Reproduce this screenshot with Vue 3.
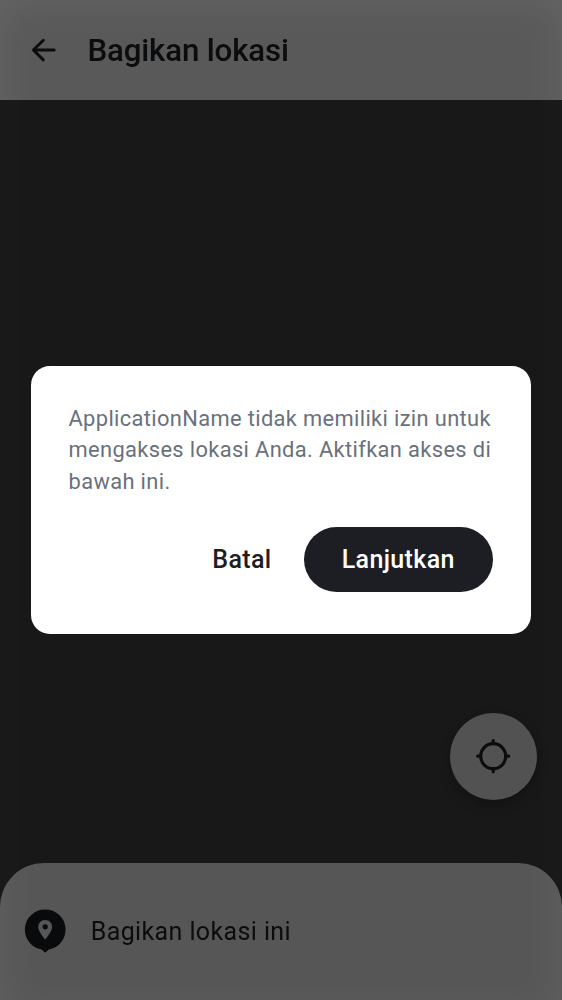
<script setup>
const title = 'Bagikan lokasi'
const message = ['ApplicationName tidak memiliki izin untuk', 'mengakses lokasi Anda. Aktifkan akses di', 'bawah ini.']
</script>

<template>
  <div class="screen">
    <header class="bar">
      <svg class="back" width="26" height="26" viewBox="0 0 26 26" fill="none" stroke="#0b0c0e" stroke-width="2.9" stroke-linecap="round" stroke-linejoin="round">
        <path d="M23.200 13H2.600M12.300 3.300L2.400 13L12.300 22.900" />
      </svg>
      <h1 class="title">{{ title }}</h1>
    </header>
    <main class="map">
      <button class="locate" aria-label="Lokasi saya">
        <svg width="36" height="36" viewBox="0 0 36 36" fill="none" stroke="#0b0c0e" stroke-width="3.2" stroke-linecap="round">
          <circle cx="18.200" cy="18.200" r="12.500" />
          <path d="M18.200 2.700V5M18.200 31V33.700M2.700 18.200H5M31 18.200H33.700" />
        </svg>
      </button>
    </main>
    <footer class="sheet">
      <svg class="pin" width="42" height="45" viewBox="0 0 42 45">
        <path fill="#090a0c" d="M21.200 .4a20.200 20.200 0 0 0-3.600 40.100L21.200 43.800l3.600-3.300A20.200 20.200 0 0 0 21.200 .4z" />
        <path fill="#575757" fill-rule="evenodd" d="M21.200 11.100c-3.900 0-6.900 2.900-6.900 6.800 0 4.900 6.900 12.500 6.900 12.500s6.900-7.600 6.900-12.500c0-3.900-3-6.800-6.900-6.800zm0 9.300a2.600 2.600 0 1 1 0-5.200 2.600 2.600 0 0 1 0 5.200z" />
      </svg>
      <span class="share">Bagikan lokasi ini</span>
    </footer>
    <div class="glow"></div>
    <div class="overlay">
      <section class="dialog" role="dialog">
        <p class="message"><span v-for="line in message" :key="line" class="line">{{ line }}</span></p>
        <div class="actions">
          <button class="cancel">Batal</button>
          <button class="confirm">Lanjutkan</button>
        </div>
      </section>
    </div>
  </div>
</template>

<style>
body { margin: 0; background: #191919; }
</style>

<style scoped>
.screen {
  position: relative;
  display: flex;
  flex-direction: column;
  width: 562px;
  height: 1000px;
  overflow: hidden;
  background: #181818;
  font-family: Roboto, sans-serif;
}
button { border: 0; padding: 0; font-family: inherit; }
svg { display: block; }
.bar {
  display: flex;
  align-items: center;
  box-sizing: border-box;
  height: 100px;
  padding-left: 31px;
  background: #595959;
}
.title {
  margin: 1px 0 0 30.500px;
  font-size: 31.25px;
  font-weight: 500;
  line-height: 40px;
  letter-spacing: -.16px;
  color: #0b0c0e;
}
.map {
  display: flex;
  flex: 1;
  justify-content: flex-end;
  align-items: flex-end;
  padding: 0 25px 62.500px 0;
}
.locate {
  display: grid;
  place-items: center;
  width: 87.500px;
  height: 87.500px;
  border-radius: 50%;
  background: #525252;
  box-shadow: 0 5px 12px rgba(0, 0, 0, .25);
}
.sheet {
  display: flex;
  align-items: center;
  box-sizing: border-box;
  height: 137.500px;
  padding-left: 24px;
  border-radius: 44px 44px 0 0;
  background: #565656;
}
.share {
  margin-left: 24.700px;
  font-size: 25px;
  letter-spacing: .39px;
  color: #0b0c0e;
}
.glow {
  position: absolute;
  inset: 0 0 -18px;
  box-shadow: inset 0 0 40px rgb(30, 30, 30);
  mix-blend-mode: color-dodge;
}
.overlay {
  position: absolute;
  inset: 0;
  display: grid;
  place-items: center;
}
.dialog {
  box-sizing: border-box;
  width: 500px;
  height: 268.500px;
  padding: 37.250px 38px 0 37.500px;
  border-radius: 19px;
  background: #fff;
}
.message {
  margin: 0;
  font-size: 21.875px;
  line-height: 31.25px;
  letter-spacing: .36px;
  color: #69717c;
}
.line { display: block; white-space: nowrap; }
.actions {
  display: flex;
  justify-content: flex-end;
  align-items: center;
  gap: 32px;
  margin-top: 29.750px;
}
.cancel, .confirm {
  font-size: 25px;
  font-weight: 500;
  letter-spacing: .35px;
}
.cancel { background: none; color: #1d1e23; }
.confirm {
  width: 189.500px;
  height: 65px;
  border-radius: 33px;
  background: #1d1e23;
  color: #fff;
}
</style>
